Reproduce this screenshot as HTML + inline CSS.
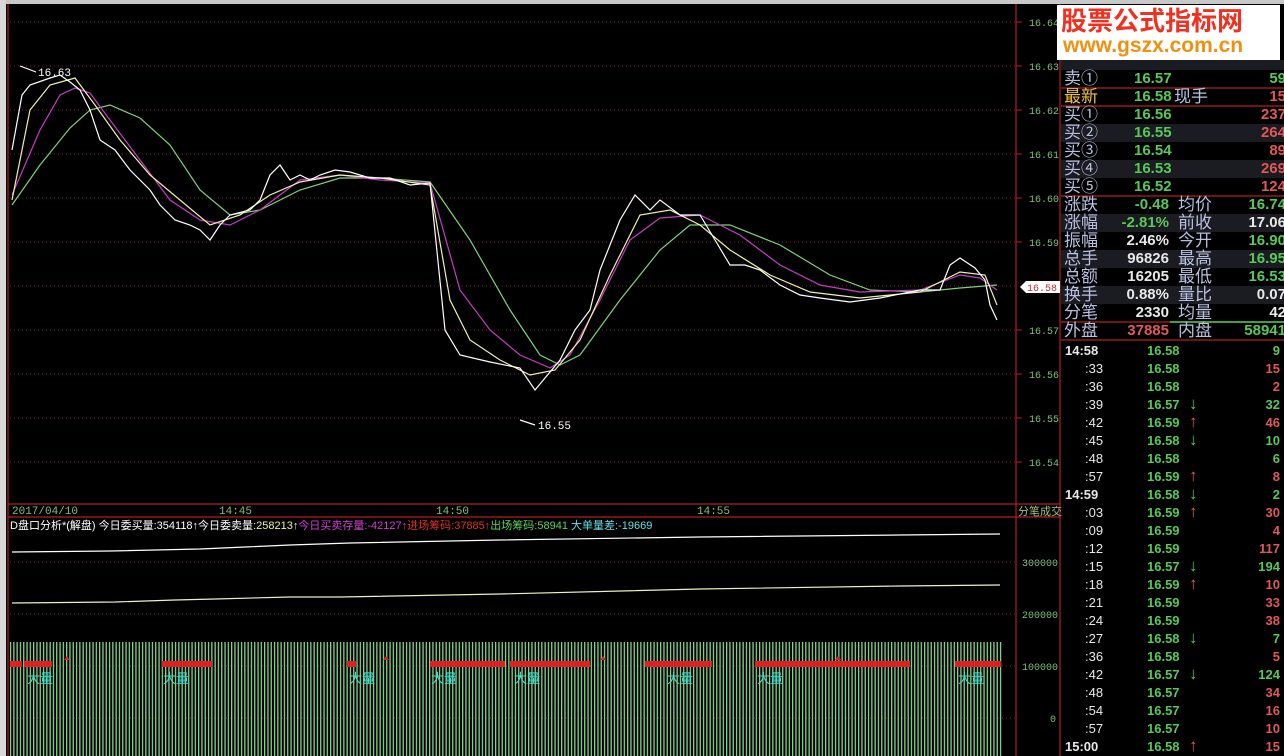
<!DOCTYPE html>
<html><head><meta charset="utf-8"><style>
body{margin:0;width:1284px;height:756px;background:#000;overflow:hidden;position:relative;font-family:"Liberation Sans","Noto Sans CJK SC",sans-serif}
.a{position:absolute}
.rp{position:absolute;left:1061px;width:223px;height:18px;font-size:15px;line-height:18px;font-weight:bold}
.rp span{position:absolute;white-space:nowrap}
.alt{background:#1b1b22}
.lab{color:#b8c0e0;font-weight:normal;left:3px;font-size:17px}
.g{color:#58c858}.r{color:#e05858}.w{color:#e8e8e8}
.t div{position:relative;height:18px}
.t span{position:absolute}
.t i{font-style:normal;font-size:17px;position:absolute;left:42px;top:-1px}
</style></head><body>
<div class="a" style="left:0;top:0;width:1284px;height:4px;background:#c8c8c8"></div>
<div class="a" style="left:0;top:0;width:6px;height:756px;background:#d8d8d8"></div>
<svg class="a" style="left:0;top:0" width="1284" height="756" font-family="Liberation Mono, monospace">
<defs><pattern id="bars" width="3.3" height="10" patternUnits="userSpaceOnUse"><rect x="0" y="0" width="1.3" height="10" fill="#86d48e"/></pattern></defs>
<g stroke="#7a2020" stroke-dasharray="1,3" stroke-width="1">
<line x1="10" y1="22" x2="1015" y2="22"/><line x1="10" y1="66" x2="1015" y2="66"/><line x1="10" y1="110" x2="1015" y2="110"/><line x1="10" y1="154" x2="1015" y2="154"/><line x1="10" y1="198" x2="1015" y2="198"/><line x1="10" y1="242" x2="1015" y2="242"/><line x1="10" y1="286" x2="1015" y2="286"/><line x1="10" y1="330" x2="1015" y2="330"/><line x1="10" y1="374" x2="1015" y2="374"/><line x1="10" y1="418" x2="1015" y2="418"/><line x1="10" y1="462" x2="1015" y2="462"/>
<line x1="10" y1="562" x2="1015" y2="562"/><line x1="10" y1="614" x2="1015" y2="614"/><line x1="10" y1="666" x2="1015" y2="666"/><line x1="10" y1="718" x2="1015" y2="718"/>
</g>
<g stroke="#b02020" stroke-width="1.2" fill="none">
<line x1="8" y1="4" x2="8" y2="756"/><line x1="1016" y1="4" x2="1016" y2="756"/><line x1="1060" y1="4" x2="1060" y2="756"/>
<line x1="8" y1="504" x2="1060" y2="504"/><line x1="8" y1="517" x2="1060" y2="517"/>
<line x1="1061" y1="88" x2="1284" y2="88"/><line x1="1061" y1="106" x2="1284" y2="106"/><line x1="1061" y1="196" x2="1284" y2="196"/><line x1="1061" y1="322" x2="1170" y2="322"/><line x1="1061" y1="340" x2="1284" y2="340"/>
</g>
<line x1="1170" y1="322" x2="1284" y2="322" stroke="#40a040" stroke-width="2"/>
<g stroke="#b02020"><line x1="1016" y1="22" x2="1022" y2="22"/><line x1="1016" y1="66" x2="1022" y2="66"/><line x1="1016" y1="110" x2="1022" y2="110"/><line x1="1016" y1="154" x2="1022" y2="154"/><line x1="1016" y1="198" x2="1022" y2="198"/><line x1="1016" y1="242" x2="1022" y2="242"/><line x1="1016" y1="330" x2="1022" y2="330"/><line x1="1016" y1="374" x2="1022" y2="374"/><line x1="1016" y1="418" x2="1022" y2="418"/><line x1="1016" y1="462" x2="1022" y2="462"/></g>
<g fill="#7fbf7f" font-size="10">
<text x="1029" y="26">16.64</text><text x="1029" y="70">16.63</text><text x="1029" y="114">16.62</text><text x="1029" y="158">16.61</text><text x="1029" y="202">16.60</text><text x="1029" y="246">16.59</text><text x="1029" y="334">16.57</text><text x="1029" y="378">16.56</text><text x="1029" y="422">16.55</text><text x="1029" y="466">16.54</text>
<text x="1022" y="566">300000</text><text x="1022" y="618">200000</text><text x="1022" y="670">100000</text><text x="1050" y="722">0</text>
<text x="12" y="514" font-size="11">2017/04/10</text><text x="219" y="514" font-size="11">14:45</text><text x="436" y="514" font-size="11">14:50</text><text x="697" y="514" font-size="11">14:55</text>
</g>
<polygon points="1020,287 1026,281 1060,281 1060,293 1026,293" fill="#fff"/>
<text x="1027" y="291" font-size="10" fill="#c03030">16.58</text>
<g fill="none" stroke-width="1.2">
<polyline stroke="#7ed07e" points="12,205 40,165 70,128 90,110 110,105 140,118 170,145 200,190 230,215 260,210 300,190 340,178 380,178 430,182 470,240 510,310 540,355 560,365 580,355 620,300 660,250 690,225 730,225 780,245 830,275 870,290 920,292 960,288 997,285"/>
<polyline stroke="#c040c0" points="12,195 40,130 60,95 75,88 90,93 110,120 140,160 170,200 200,220 230,225 260,210 300,180 340,175 380,180 430,183 460,290 490,330 520,355 550,368 570,355 600,300 630,240 660,218 700,215 740,235 780,265 820,285 860,292 920,290 960,275 980,278 997,290"/>
<polyline stroke="#f0f0b0" points="12,200 30,110 50,85 75,78 95,105 120,140 150,175 180,200 210,225 240,215 270,195 300,182 340,175 380,178 430,185 450,300 470,340 500,360 530,375 555,370 580,340 610,275 640,215 670,210 700,225 730,250 770,275 810,292 860,298 920,292 960,272 985,275 997,305"/>
<polyline stroke="#fff" points="12,150 22,95 30,85 50,78 60,75 70,82 80,90 90,110 100,140 115,150 130,170 150,190 160,205 175,220 190,225 200,230 210,240 220,225 230,215 250,210 260,200 270,175 280,165 290,180 300,175 310,180 320,175 335,170 350,172 370,178 390,178 410,185 430,183 445,330 460,355 490,362 520,368 535,390 545,378 560,360 575,330 590,310 600,270 620,220 635,195 650,210 660,200 680,215 700,215 715,240 730,265 745,265 760,270 780,285 800,295 820,298 850,302 880,298 920,290 940,290 950,265 960,258 975,268 985,280 990,305 997,320"/>
<line x1="20" y1="66" x2="36" y2="72" stroke="#fff"/><line x1="520" y1="420" x2="535" y2="425" stroke="#fff"/>
<polyline stroke="#fff" points="12,552 110,551 200,549 245,547 290,545 350,543 500,540 700,537 900,535 1000,534"/>
<polyline stroke="#f0f0c0" points="12,603 115,602 175,600 215,599 290,597 340,597 500,594 700,589 900,586 1000,585"/>
</g>
<text x="38" y="76" font-size="11" fill="#fff">16.63</text><text x="538" y="429" font-size="11" fill="#fff">16.55</text>
<rect x="10" y="642" width="992" height="114" fill="url(#bars)"/>
<g fill="#e02020">
<rect x="10" y="661" width="12" height="6"/><rect x="24" y="661" width="28" height="6"/><rect x="162" y="661" width="50" height="6"/><rect x="347" y="661" width="9" height="6"/><rect x="430" y="661" width="75" height="6"/><rect x="510" y="661" width="80" height="6"/><rect x="645" y="661" width="67" height="6"/><rect x="755" y="661" width="155" height="6"/><rect x="955" y="661" width="46" height="6"/>
<polygon points="64,660 67,656 70,660"/><polygon points="383,660 386,656 389,660"/><polygon points="600,660 603,656 606,660"/><polygon points="835,660 838,656 841,660"/>
</g>
<g fill="#40e0d0" font-size="13" font-family="Liberation Sans, Noto Sans CJK SC, sans-serif">
<text x="27" y="683">大量</text><text x="163" y="683">大量</text><text x="349" y="683">大量</text><text x="431" y="683">大量</text><text x="514" y="683">大量</text><text x="667" y="683">大量</text><text x="757" y="683">大量</text><text x="958" y="683">大量</text>
</g>
<text x="1018" y="515" font-size="11" fill="#a0c080" font-family="Noto Sans CJK SC, sans-serif">分笔成交</text>
<text x="10" y="529" font-size="11" font-family="Liberation Sans, Noto Sans CJK SC, sans-serif"><tspan fill="#fff">D盘口分析*(解盘) 今日委买量:354118↑今日委卖量</tspan><tspan fill="#f0f0a0">:258213↑</tspan><tspan fill="#d040d0">今日买卖存量:-42127↑</tspan><tspan fill="#e03030">进场筹码:37885↑</tspan><tspan fill="#60d060">出场筹码:58941 </tspan><tspan fill="#60e0e0">大单量差:-19669</tspan></text>
</svg>

<div class="a" style="left:1057px;top:5px;width:223px;height:55px;background:#fff"></div>
<div class="a" style="left:1061px;top:3px;font-size:26px;font-weight:bold;color:#f03020;font-family:'Noto Sans CJK SC',sans-serif;line-height:34px">股票公式指标网</div>
<div class="a" style="left:1063px;top:34px;font-size:21px;font-weight:bold;color:#f09010;line-height:24px">www.gszx.com.cn</div>

<div class="rp alt" style="top:60px;height:10px"></div>
<div class="rp" style="top:70px"><span class="lab">卖①</span><span class="g" style="left:73px">16.57</span><span class="g" style="right:-2px">59</span></div>
<div class="rp" style="top:88px"><span class="lab" style="color:#f0c040">最新</span><span class="g" style="left:73px">16.58</span><span class="lab" style="left:113px">现手</span><span class="r" style="right:-2px">15</span></div>
<div class="rp" style="top:106px"><span class="lab">买①</span><span class="g" style="left:73px">16.56</span><span class="r" style="right:-2px">237</span></div>
<div class="rp alt" style="top:124px"><span class="lab">买②</span><span class="g" style="left:73px">16.55</span><span class="r" style="right:-2px">264</span></div>
<div class="rp" style="top:142px"><span class="lab">买③</span><span class="g" style="left:73px">16.54</span><span class="r" style="right:-2px">89</span></div>
<div class="rp alt" style="top:160px"><span class="lab">买④</span><span class="g" style="left:73px">16.53</span><span class="r" style="right:-2px">269</span></div>
<div class="rp" style="top:178px"><span class="lab">买⑤</span><span class="g" style="left:73px">16.52</span><span class="r" style="right:-2px">124</span></div>
<div class="rp" style="top:196px"><span class="lab">涨跌</span><span class="g" style="right:115px">-0.48</span><span class="lab" style="left:117px">均价</span><span class="g" style="right:-2px">16.74</span></div>
<div class="rp alt" style="top:214px"><span class="lab">涨幅</span><span class="g" style="right:115px">-2.81%</span><span class="lab" style="left:117px">前收</span><span class="w" style="right:-2px">17.06</span></div>
<div class="rp" style="top:232px"><span class="lab">振幅</span><span class="w" style="right:115px">2.46%</span><span class="lab" style="left:117px">今开</span><span class="g" style="right:-2px">16.90</span></div>
<div class="rp alt" style="top:250px"><span class="lab">总手</span><span class="w" style="right:115px">96826</span><span class="lab" style="left:117px">最高</span><span class="g" style="right:-2px">16.95</span></div>
<div class="rp" style="top:268px"><span class="lab">总额</span><span class="w" style="right:115px">16205</span><span class="lab" style="left:117px">最低</span><span class="g" style="right:-2px">16.53</span></div>
<div class="rp alt" style="top:286px"><span class="lab">换手</span><span class="w" style="right:115px">0.88%</span><span class="lab" style="left:117px">量比</span><span class="w" style="right:-2px">0.07</span></div>
<div class="rp" style="top:304px"><span class="lab">分笔</span><span class="w" style="right:115px">2330</span><span class="lab" style="left:117px">均量</span><span class="w" style="right:-2px">42</span></div>
<div class="rp" style="top:322px"><span class="lab">外盘</span><span class="r" style="right:115px">37885</span><span class="lab" style="left:117px">内盘</span><span class="g" style="right:-2px">58941</span></div>

<div class="a t" style="left:1061px;top:342px;width:223px;font-size:13px;font-weight:bold;line-height:18px">
<div><span class="w" style="left:4px">14:58</span><span class="g" style="left:86px">16.58</span><span class="g" style="right:4px">9</span></div>
<div><span class="w" style="left:24px;font-weight:normal">:33</span><span class="g" style="left:86px">16.58</span><span class="r" style="right:4px">15</span></div>
<div><span class="w" style="left:24px;font-weight:normal">:36</span><span class="g" style="left:86px">16.58</span><span class="r" style="right:4px">2</span></div>
<div><span class="w" style="left:24px;font-weight:normal">:39</span><span class="g" style="left:86px">16.57<i class="g">↓</i></span><span class="g" style="right:4px">32</span></div>
<div><span class="w" style="left:24px;font-weight:normal">:42</span><span class="g" style="left:86px">16.59<i class="r">↑</i></span><span class="r" style="right:4px">46</span></div>
<div><span class="w" style="left:24px;font-weight:normal">:45</span><span class="g" style="left:86px">16.58<i class="g">↓</i></span><span class="g" style="right:4px">10</span></div>
<div><span class="w" style="left:24px;font-weight:normal">:48</span><span class="g" style="left:86px">16.58</span><span class="g" style="right:4px">6</span></div>
<div><span class="w" style="left:24px;font-weight:normal">:57</span><span class="g" style="left:86px">16.59<i class="r">↑</i></span><span class="r" style="right:4px">8</span></div>
<div><span class="w" style="left:4px">14:59</span><span class="g" style="left:86px">16.58<i class="g">↓</i></span><span class="g" style="right:4px">2</span></div>
<div><span class="w" style="left:24px;font-weight:normal">:03</span><span class="g" style="left:86px">16.59<i class="r">↑</i></span><span class="r" style="right:4px">30</span></div>
<div><span class="w" style="left:24px;font-weight:normal">:09</span><span class="g" style="left:86px">16.59</span><span class="r" style="right:4px">4</span></div>
<div><span class="w" style="left:24px;font-weight:normal">:12</span><span class="g" style="left:86px">16.59</span><span class="r" style="right:4px">117</span></div>
<div><span class="w" style="left:24px;font-weight:normal">:15</span><span class="g" style="left:86px">16.57<i class="g">↓</i></span><span class="g" style="right:4px">194</span></div>
<div><span class="w" style="left:24px;font-weight:normal">:18</span><span class="g" style="left:86px">16.59<i class="r">↑</i></span><span class="r" style="right:4px">10</span></div>
<div><span class="w" style="left:24px;font-weight:normal">:21</span><span class="g" style="left:86px">16.59</span><span class="r" style="right:4px">33</span></div>
<div><span class="w" style="left:24px;font-weight:normal">:24</span><span class="g" style="left:86px">16.59</span><span class="r" style="right:4px">38</span></div>
<div><span class="w" style="left:24px;font-weight:normal">:27</span><span class="g" style="left:86px">16.58<i class="g">↓</i></span><span class="g" style="right:4px">7</span></div>
<div><span class="w" style="left:24px;font-weight:normal">:36</span><span class="g" style="left:86px">16.58</span><span class="r" style="right:4px">5</span></div>
<div><span class="w" style="left:24px;font-weight:normal">:42</span><span class="g" style="left:86px">16.57<i class="g">↓</i></span><span class="g" style="right:4px">124</span></div>
<div><span class="w" style="left:24px;font-weight:normal">:48</span><span class="g" style="left:86px">16.57</span><span class="r" style="right:4px">34</span></div>
<div><span class="w" style="left:24px;font-weight:normal">:54</span><span class="g" style="left:86px">16.57</span><span class="r" style="right:4px">16</span></div>
<div><span class="w" style="left:24px;font-weight:normal">:57</span><span class="g" style="left:86px">16.57</span><span class="r" style="right:4px">10</span></div>
<div><span class="w" style="left:4px">15:00</span><span class="g" style="left:86px">16.58<i class="r">↑</i></span><span class="r" style="right:4px">15</span></div>
</div>
</body></html>
